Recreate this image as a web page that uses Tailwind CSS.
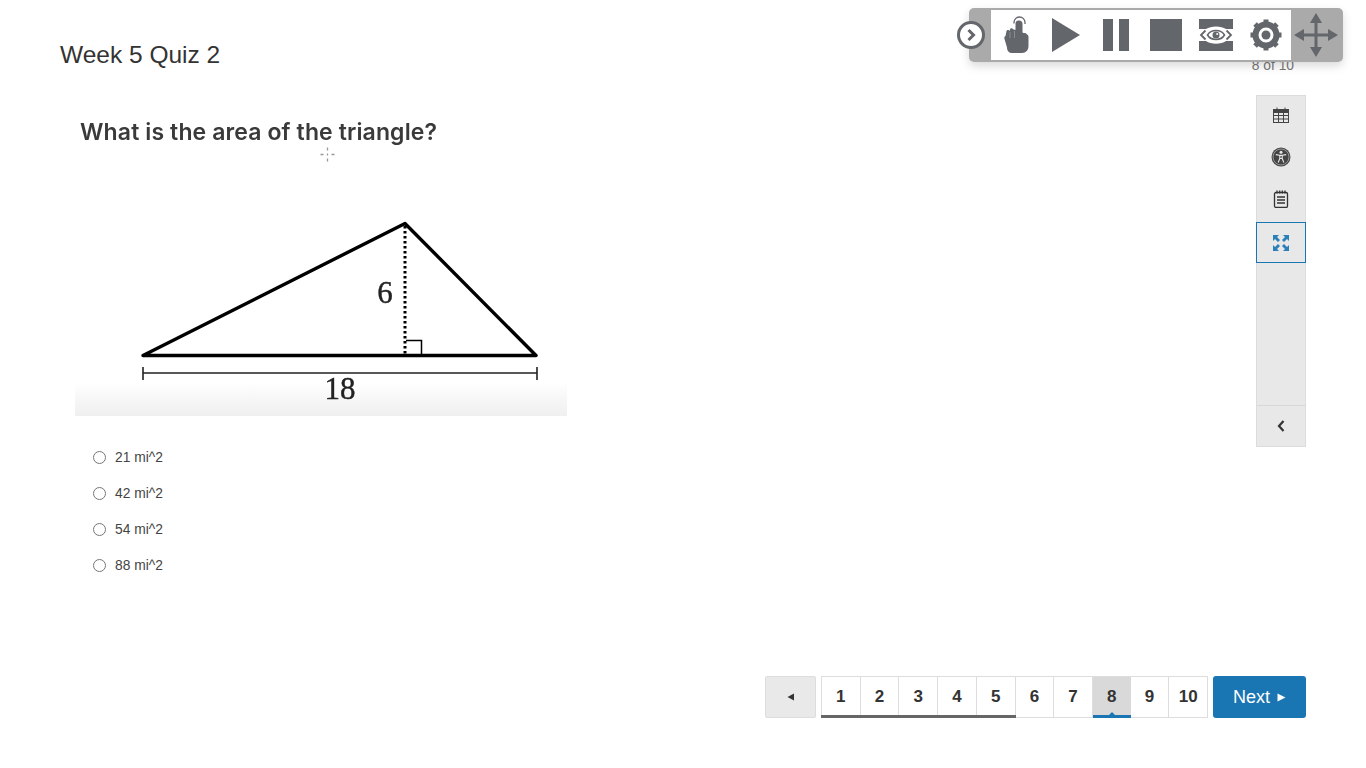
<!DOCTYPE html>
<html lang="en">
<head>
  <meta charset="UTF-8" />
  <title>Week 5 Quiz 2</title>
  <script src="https://cdn.jsdelivr.net/npm/@tailwindcss/browser@4"></script>
</head>
<body class="bg-white text-[#333] font-['Liberation_Sans',Arial,sans-serif]">
  <div class="relative w-[1366px] h-[768px] overflow-hidden">

    <!-- floating read-aloud toolbar -->
    <div class="absolute left-[969px] top-[8px] z-10 flex h-[54px] w-[374px] rounded-[5px] bg-[#aaaaaa] shadow-[0_4px_10px_rgba(0,0,0,0.15)]">
      <div class="absolute left-[-12px] top-[13px] flex h-[28px] w-[28px] items-center justify-center rounded-full border-[3px] border-[#63666b] bg-white">
        <svg width="12" height="14" viewBox="0 0 12 14"><path d="M3.500 2 L8.500 7 L3.500 12" fill="none" stroke="#63666b" stroke-width="3"/></svg>
      </div>
      <div class="ml-[22px] my-[2px] flex h-[50px] w-[300px] bg-white">
        <div class="flex w-[50px] items-center justify-center">
          <svg width="26" height="38" viewBox="0 0 26 38" fill="#63666b">
            <path d="M11 7.500V6.500a5.500 5.500 0 0 1 11 0V8" fill="none" stroke="#63666b" stroke-width="1.300"/>
            <path d="M12.500 8a3.500 3.500 0 0 1 7 0V16.500l1 .5c1.500-.3 2.500 0 3.500 1.500.8.300 1.500 1.200 1.500 2.500V30c0 4-2.500 7-6.500 7H9.500C6 37 4 35 4 31.500L1.500 23c-.5-1.500 0-2.500 1-3l1-5c.3-1.500 2.500-1.500 3 0l.5-1.500c.4-1.500 2.500-1.700 3-.2l2.500.7z"/>
            <path d="M7 16v6M11.500 15v7" stroke="#fff" stroke-width="0.500" opacity="0.500"/>
          </svg>
        </div>
        <div class="flex w-[50px] items-center justify-center">
          <svg width="30" height="34" viewBox="0 0 30 34"><path d="M1 0 L29 17 L1 34 Z" fill="#63666b"/></svg>
        </div>
        <div class="flex w-[50px] items-center justify-center gap-[6px]">
          <span class="h-[32px] w-[10px] bg-[#63666b]"></span>
          <span class="h-[32px] w-[10px] bg-[#63666b]"></span>
        </div>
        <div class="flex w-[50px] items-center justify-center">
          <span class="h-[32px] w-[32px] bg-[#63666b]"></span>
        </div>
        <div class="flex w-[50px] items-center justify-center">
          <svg width="34" height="32" viewBox="0 0 34 32">
            <rect width="34" height="32" fill="#63666b"/>
            <rect y="10" width="34" height="12" fill="#fff"/>
            <path d="M7 10 C12 6.500 22 6.500 27 10 L31 16 L27 22 C22 25.500 12 25.500 7 22 L3 16z" fill="#fff"/>
            <path d="M8.500 16 C12 10 22 10 25.500 16 C22 22 12 22 8.500 16z" fill="none" stroke="#63666b" stroke-width="1.500"/>
            <circle cx="17" cy="16" r="3.500" fill="#63666b"/>
            <circle cx="18.200" cy="15" r="1" fill="#fff"/>
            <path d="M6.500 11.500 L2 16 L6.500 20.500 M27.500 11.500 L32 16 L27.500 20.500" fill="none" stroke="#63666b" stroke-width="1.800"/>
          </svg>
        </div>
        <div class="flex w-[50px] items-center justify-center">
          <svg width="32" height="32" viewBox="0 0 32 32">
            <circle cx="16" cy="16" r="10.500" fill="none" stroke="#63666b" stroke-width="6"/>
            <circle cx="16" cy="16" r="4.500" fill="#63666b"/>
            <path d="M13.500 0.500h5v6h-5zM13.500 25.500h5v6h-5zM0.500 13.500h6v5h-6zM25.500 13.500h6v5h-6z" fill="#63666b"/>
            <path d="M13.500 0.500h5v6h-5zM13.500 25.500h5v6h-5zM0.500 13.500h6v5h-6zM25.500 13.500h6v5h-6z" fill="#63666b" transform="rotate(45 16 16)"/>
          </svg>
        </div>
      </div>
      <div class="-ml-[2px] flex w-[54px] items-center justify-center">
        <svg width="44" height="44" viewBox="0 0 44 44" fill="#63666b">
          <path d="M22 0 L28 10 H23.500 V20.500 H34 V16 L44 22 L34 28 V23.500 H23.500 V34 H28 L22 44 L16 34 H20.500 V23.500 H10 V28 L0 22 L10 16 V20.500 H20.500 V10 H16 Z"/>
        </svg>
      </div>
    </div>

    <header class="flex h-[95px] justify-between pl-[60px] pr-[72px]">
      <h1 class="pt-[40px] text-[24.500px] leading-[30px] text-[#333]">Week 5 Quiz 2</h1>
      <span class="pt-[58px] text-[13.800px] leading-[16px] text-[#777]">8 of 10</span>
    </header>

    <main class="flex h-[673px] justify-between pl-[75px] pr-[60px]">
      <div class="flex flex-col">
        <!-- question picture -->
        <svg class="mt-[17px] blur-[0.4px]" width="492" height="304" viewBox="75 112 492 304">
          <defs>
            <linearGradient id="fade" x1="0" y1="0" x2="0" y2="1">
              <stop offset="0" stop-color="#fff"/>
              <stop offset="1" stop-color="#efefef"/>
            </linearGradient>
          </defs>
          <rect x="75" y="382" width="492" height="34" fill="url(#fade)"/>
          <text x="80" y="140" font-family="Inter, sans-serif" font-weight="600" font-size="23" fill="#3a3a3a" textLength="357">What is the area of the triangle?</text>
          <path d="M327.500 147.500v3M327.500 158.500v3M320.500 154.500h3M331.500 154.500h3M327.500 153.500v2" stroke="#999" stroke-width="1.300"/>
          <path d="M143 355.500 L405 223.500 L536 355.500 Z" fill="none" stroke="#000" stroke-width="3.400" stroke-linejoin="round"/>
          <path d="M405 226 V354" stroke="#000" stroke-width="3" stroke-dasharray="2.500 2.500"/>
          <path d="M406 340.500 H421.500 V354" fill="none" stroke="#000" stroke-width="1.500"/>
          <path d="M143 373 H537 M143 367 V380 M537 367 V380" fill="none" stroke="#222" stroke-width="1.600"/>
          <text x="385" y="303" text-anchor="middle" font-family="'Liberation Serif', serif" font-size="31" fill="#222" stroke="#222" stroke-width="0.400">6</text>
          <text x="340" y="399" text-anchor="middle" font-family="'Liberation Serif', serif" font-size="31" fill="#222" stroke="#222" stroke-width="0.400">18</text>
        </svg>
        <ul class="mt-[31px] flex flex-col gap-[16px] pl-[18px] text-[13.800px] leading-[20px] text-[#444]">
          <li class="flex h-[20px] items-center gap-[9px]"><span class="h-[13px] w-[13px] rounded-full border border-[#767676] bg-white"></span><span class="pt-[1px]">21 mi^2</span></li>
          <li class="flex h-[20px] items-center gap-[9px]"><span class="h-[13px] w-[13px] rounded-full border border-[#767676] bg-white"></span><span class="pt-[1px]">42 mi^2</span></li>
          <li class="flex h-[20px] items-center gap-[9px]"><span class="h-[13px] w-[13px] rounded-full border border-[#767676] bg-white"></span><span class="pt-[1px]">54 mi^2</span></li>
          <li class="flex h-[20px] items-center gap-[9px]"><span class="h-[13px] w-[13px] rounded-full border border-[#767676] bg-white"></span><span class="pt-[1px]">88 mi^2</span></li>
        </ul>
      </div>

      <div class="flex h-[673px] flex-col justify-between">
        <!-- tools rail -->
        <aside class="ml-auto flex h-[352px] w-[50px] flex-col border border-[#dcdcdc] bg-[#e8e8e8]">
          <div class="flex h-[40px] items-center justify-center">
            <svg class="mb-[2px]" width="16" height="16" viewBox="0 0 16 16" fill="none" stroke="#444" stroke-width="1">
              <rect x="0.500" y="2.500" width="15" height="13"/>
              <rect x="0.500" y="2.500" width="15" height="3" fill="#444"/>
              <path d="M0.500 8.500h15M0.500 12h15M5.500 5.500v10M10.500 5.500v10M4 0.500v3M12 0.500v3"/>
            </svg>
          </div>
          <div class="flex h-[41px] items-center justify-center">
            <svg width="20" height="20" viewBox="0 0 20 20">
              <circle cx="10" cy="10" r="9.500" fill="#444"/>
              <circle cx="10" cy="10" r="8" fill="none" stroke="#e8e8e8" stroke-width="0.500"/>
              <circle cx="10" cy="5.200" r="1.500" fill="#e8e8e8"/>
              <path d="M4.800 7.600 L8.600 8.300 H11.400 L15.200 7.600 M8.800 8.500 V11.500 L7.200 15.500 M11.200 8.500 V11.500 L12.800 15.500 M8.800 8.500 H11.200 V11.500 H8.800z" fill="none" stroke="#e8e8e8" stroke-width="1.100"/>
            </svg>
          </div>
          <div class="flex h-[45px] items-center justify-center">
            <svg class="mb-[2px]" width="16" height="18" viewBox="0 0 16 18" fill="none" stroke="#333" stroke-width="1.300">
              <rect x="1.500" y="2.500" width="13" height="15" rx="1.500"/>
              <path d="M4 0.500v3M6.700 0.500v3M9.300 0.500v3M12 0.500v3M4 7h8M4 10h8M4 13h8"/>
            </svg>
          </div>
          <div class="-mx-px flex h-[41px] items-center justify-center border border-[#1a75b3]">
            <svg width="18" height="18" viewBox="0 0 18 18" fill="#2b80b9">
              <path d="M1 1h6L5 3l3 3-2 2-3-3-2 2zM17 1v6l-2-2-3 3-2-2 3-3-2-2zM1 17v-6l2 2 3-3 2 2-3 3 2 2zM17 17h-6l2-2-3-3 2-2 3 3 2-2z"/>
            </svg>
          </div>
          <div class="mt-auto flex h-[41px] items-center justify-center border-t border-[#d8d8d8]">
            <svg width="8" height="12" viewBox="0 0 8 12"><path d="M6.500 1 L2 6 L6.500 11" fill="none" stroke="#333" stroke-width="2.200"/></svg>
          </div>
        </aside>

        <!-- question nav -->
        <nav class="mb-[50px] flex h-[42px] items-start gap-[5px]">
          <button class="flex h-[42px] w-[51px] items-center justify-center rounded-[2px] border border-[#ddd] bg-[#e9e9e9]">
            <svg width="8" height="8" viewBox="0 0 8 8"><path d="M7 0.500 V7.500 L0.500 4 Z" fill="#333"/></svg>
          </button>
          <ol class="flex h-[42px] w-[387px] border border-[#ddd] text-[17px] font-bold text-[#333]">
            <li class="relative flex flex-1 items-center justify-center border-r border-[#ddd] after:absolute after:inset-x-[-1px] after:bottom-[-1px] after:h-[3px] after:bg-[#666]">1</li>
            <li class="relative flex flex-1 items-center justify-center border-r border-[#ddd] after:absolute after:inset-x-[-1px] after:bottom-[-1px] after:h-[3px] after:bg-[#666]">2</li>
            <li class="relative flex flex-1 items-center justify-center border-r border-[#ddd] after:absolute after:inset-x-[-1px] after:bottom-[-1px] after:h-[3px] after:bg-[#666]">3</li>
            <li class="relative flex flex-1 items-center justify-center border-r border-[#ddd] after:absolute after:inset-x-[-1px] after:bottom-[-1px] after:h-[3px] after:bg-[#666]">4</li>
            <li class="relative flex flex-1 items-center justify-center border-r border-[#ddd] after:absolute after:inset-x-[-1px] after:bottom-[-1px] after:h-[3px] after:bg-[#666]">5</li>
            <li class="flex flex-1 items-center justify-center border-r border-[#ddd]">6</li>
            <li class="flex flex-1 items-center justify-center border-r border-[#ddd]">7</li>
            <li class="relative flex flex-1 items-center justify-center bg-[#d9d9d9] after:absolute after:inset-x-0 after:bottom-[-1px] after:h-[3px] after:bg-[#1a75b3]">8
              <span class="absolute bottom-[1px] left-1/2 h-0 w-0 -translate-x-1/2 border-x-[4px] border-b-[4px] border-x-transparent border-b-[#1a75b3]"></span>
            </li>
            <li class="flex flex-1 items-center justify-center border-r border-[#ddd]">9</li>
            <li class="flex flex-1 items-center justify-center">10</li>
          </ol>
          <button class="flex h-[42px] w-[93px] items-center justify-center gap-[7px] rounded-[3px] bg-[#1a75b3] text-[18px] text-white">
            Next
            <svg width="9" height="9" viewBox="0 0 9 9"><path d="M0.500 0.500 V8.500 L8.500 4.500 Z" fill="#fff"/></svg>
          </button>
        </nav>
      </div>
    </main>
  </div>
</body>
</html>
